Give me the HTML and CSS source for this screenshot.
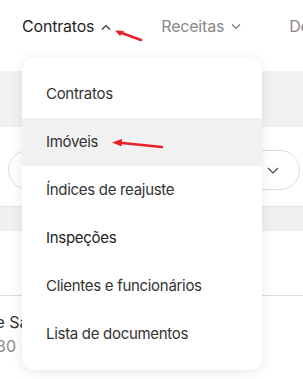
FILE: index.html
```html
<!DOCTYPE html>
<html lang="pt">
<head>
    <meta charset="UTF-8">
    <meta name="viewport" content="width=device-width, initial-scale=1.0">
    <title>Contratos</title>
    <link rel="stylesheet" href="styles.css">
</head>
<body>
    <nav class="topnav">
        <div class="nav-item active">Contratos
            <svg class="chev" width="10" height="6" viewBox="0 0 10 6"><path d="M1 5.5L5 1.5L9 5.5" fill="none" stroke="#333" stroke-width="1.2"/></svg>
        </div>
        <div class="nav-item">Receitas
            <svg class="chev" width="10" height="6" viewBox="0 0 10 6"><path d="M1 0.5L5 4.5L9 0.5" fill="none" stroke="#777" stroke-width="1.2"/></svg>
        </div>
        <div class="nav-item">Despesas</div>
    </nav>

    <div class="page">
        <div class="banner"></div>
        <div class="filter">
            <div class="pill">
                <span class="dot"></span>
                <svg width="12" height="7" viewBox="0 0 12 7"><path d="M1 1L6 6L11 1" fill="none" stroke="#444" stroke-width="1.2"/></svg>
            </div>
        </div>
        <div class="table-head"></div>
        <div class="table-row">
            <p class="row-title">Casa de Santos</p>
            <p class="row-sub">30 · Residencial</p>
        </div>
    </div>

    <div class="dropdown">
        <a class="menu-item">Contratos</a>
        <a class="menu-item hover">Imóveis</a>
        <a class="menu-item">Índices de reajuste</a>
        <a class="menu-item strong">Inspeções</a>
        <a class="menu-item">Clientes e funcionários</a>
        <a class="menu-item">Lista de documentos</a>
    </div>

    <!-- annotation arrows -->
    <svg class="arrow arrow-top" width="30" height="14" viewBox="0 0 30 14">
        <path d="M27 11L5 3" stroke="#e8202a" stroke-width="2.4" stroke-linecap="round"/>
        <path d="M1 1.5L10 2L6 7Z" fill="#e8202a"/>
    </svg>
    <svg class="arrow arrow-menu" width="54" height="12" viewBox="0 0 54 12">
        <path d="M51 8L6 3.5" stroke="#e8202a" stroke-width="2.4" stroke-linecap="round"/>
        <path d="M1 3.5L11 0L10.5 7.5Z" fill="#e8202a"/>
    </svg>
</body>
</html>
```

FILE: styles.css
```css
body { margin: 0; font-family: Inter, "Noto Sans", sans-serif; background: #fff; color: #222; width: 303px; height: 379px; overflow: hidden; position: relative; }

.topnav { display: flex; align-items: center; height: 52px; padding-left: 22px; white-space: nowrap; overflow: hidden; }
.nav-item { display: flex; align-items: center; gap: 7px; font-size: 16px; color: #888; letter-spacing: -0.2px; margin-right: 48px; }
.nav-item.active { color: #1f1f1f; margin-right: 50px; }
.chev { margin-top: 1px; }

.page { padding-top: 19px; overflow: hidden; }
.banner { height: 56px; background: #f1f1f1; }
.filter { padding: 23px 3px 0 8px; }
.pill { height: 38px; border: 1px solid #ddd; border-radius: 20px; display: flex; align-items: center; justify-content: flex-end; gap: 9px; padding-right: 20px; }
.dot { width: 3px; height: 3px; background: #7a8aa8; border-radius: 50%; margin-top: -3px; }
.table-head { margin-top: 16px; height: 24px; background: #f0f0f0; border-top: 1px solid #e4e4e4; }
.table-row { margin-top: 64px; border-top: 1px solid #dcdcdc; padding: 16px 0 0 0; }
.row-title { margin: 0 0 0 -57px; font-size: 16px; color: #333; white-space: nowrap; }
.row-sub { margin: 4px 0 0 -4px; font-size: 16px; color: #888; white-space: nowrap; }

.dropdown { position: absolute; left: 22px; top: 58px; width: 240px; padding: 12px 0; background: #fff; border-radius: 12px; box-shadow: 0 2px 14px rgba(0,0,0,0.09); }
.menu-item { display: block; height: 48px; line-height: 48px; padding-left: 24px; font-size: 15px; color: #333; letter-spacing: -0.3px; }
.menu-item.hover { background: #f1f1f1; }
.menu-item.strong { color: #222; }

.arrow { position: absolute; }
.arrow-top { left: 114px; top: 29px; }
.arrow-menu { left: 111px; top: 139px; }
```
